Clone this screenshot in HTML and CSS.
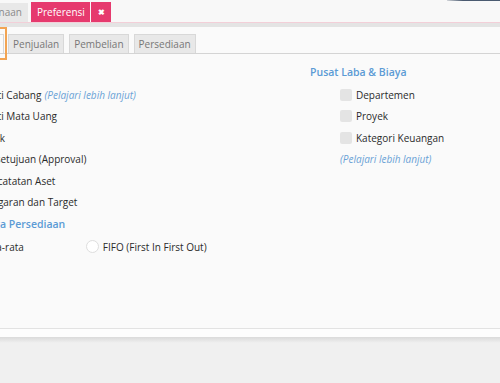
FILE: index.html
```html
<!DOCTYPE html>
<html>
<head>
<meta charset="utf-8">
<link rel="stylesheet" href="styles.css">
</head>
<body>
<div class="screen">
  <div class="edge"></div>
  <div class="topbar">
    <div class="tab-prev">Penggunaan</div>
    <div class="tab-active">Preferensi</div>
    <div class="tab-close">&#x2716;</div>
  </div>
  <div class="band"></div>
  <div class="panel">
    <div class="focus-ring"></div>
    <div class="subtabs">
      <div class="subtab subtab-current">Umum</div>
      <div class="subtab">Penjualan</div>
      <div class="subtab">Pembelian</div>
      <div class="subtab">Persediaan</div>
    </div>
    <div class="content">
      <div class="col">
        <div class="heading heading-first">Fitur</div>
        <div class="row"><span class="cb"></span><span>Multi Cabang</span><span class="link">(Pelajari lebih lanjut)</span></div>
        <div class="row"><span class="cb"></span><span>Multi Mata Uang</span></div>
        <div class="row"><span class="cb"></span><span>Pajak</span></div>
        <div class="row"><span class="cb"></span><span>Persetujuan (Approval)</span></div>
        <div class="row"><span class="cb"></span><span>Pencatatan Aset</span></div>
        <div class="row"><span class="cb"></span><span>Anggaran dan Target</span></div>
        <div class="heading">Metode Harga Persediaan</div>
        <div class="row radios">
          <span class="opt"><span class="rb"></span><span>Rata-rata</span></span>
          <span class="opt opt-fifo"><span class="rb"></span><span>FIFO (First In First Out)</span></span>
        </div>
      </div>
      <div class="col">
        <div class="heading">Pusat Laba &amp; Biaya</div>
        <div class="row"><span class="cb"></span><span>Departemen</span></div>
        <div class="row"><span class="cb"></span><span>Proyek</span></div>
        <div class="row"><span class="cb"></span><span>Kategori Keuangan</span></div>
        <div class="row"><span class="link link-solo">(Pelajari lebih lanjut)</span></div>
      </div>
    </div>
  </div>
  <div class="strip"></div>
  <div class="shadow"></div>
</div>
</body>
</html>
```
FILE: styles.css
```css
html, body {
  margin: 0;
  padding: 0;
}
body {
  width: 500px;
  height: 383px;
  overflow: hidden;
  background: #f0f0f0;
  font-family: "Open Sans", "Liberation Sans", sans-serif;
  font-size: 10px;
  color: #2a2a2a;
}
.screen {
  position: relative;
  width: 500px;
  height: 383px;
  overflow: hidden;
}
.edge {
  position: absolute;
  top: 0;
  left: 447px;
  width: 53px;
  height: 1px;
  background: linear-gradient(to right, rgba(60,75,95,0.2), #4a5a70 30%);
}
.topbar {
  height: 22px;
  background: #f8f8f8;
  display: flex;
  align-items: flex-end;
  border-bottom: 1px solid #f3cfd8;
}
.tab-prev {
  height: 19px;
  line-height: 19px;
  width: 86px;
  margin-left: -58px;
  margin-right: 3px;
  text-align: right;
  padding-right: 6px;
  box-sizing: border-box;
  background: #e8e8e8;
  color: #8a8a8a;
  white-space: nowrap;
}
.tab-active {
  height: 20px;
  line-height: 20px;
  width: 59px;
  box-sizing: border-box;
  padding-left: 6px;
  background: #e63a6e;
  color: #fff;
}
.tab-close {
  height: 20px;
  line-height: 20px;
  width: 20px;
  margin-left: 1px;
  text-align: center;
  background: #e63a6e;
  color: #fff;
  font-size: 8px;
  font-weight: bold;
}
.band {
  height: 4px;
  background: #e4e4e4;
}
.panel {
  position: relative;
  height: 294px;
  padding-top: 7px;
  background: #fafafa;
  border-bottom: 1px solid #e2e2e2;
}
.focus-ring {
  position: absolute;
  left: -40px;
  top: 0;
  width: 47px;
  height: 33px;
  box-sizing: border-box;
  border: 2px solid #f2a453;
}
.subtabs {
  margin-left: -40px;
  height: 19px;
  border-bottom: 1px solid #d4d4d4;
  display: flex;
  align-items: flex-end;
}
.subtab {
  height: 19px;
  line-height: 19px;
  box-sizing: border-box;
  padding: 0 4px;
  margin-right: 5px;
  background: #e8e8e8;
  border: 1px solid #d8d8d8;
  border-bottom: none;
  color: #777;
}
.subtab-current {
  width: 44px;
  margin-right: 4px;
  background: #fafafa;
  color: #333;
}
.content {
  margin-left: -66px;
  padding-top: 7px;
  display: grid;
  grid-template-columns: 376px 1fr;
}
.col {
  display: flex;
  flex-direction: column;
}
.heading {
  height: 23px;
  line-height: 23px;
  color: #5b9bd5;
  font-weight: 600;
  font-size: 10.5px;
  white-space: nowrap;
}
.row {
  height: 21.5px;
  display: flex;
  align-items: center;
  padding-left: 30px;
  white-space: nowrap;
}
.cb {
  width: 12px;
  height: 12px;
  border-radius: 2px;
  background: #e4e4e4;
  margin-right: 4px;
  flex: none;
}
.link {
  color: #6aa2d6;
  font-style: italic;
  margin-left: 3px;
}
.link-solo {
  margin-left: 0;
}
.opt {
  display: flex;
  align-items: center;
}
.opt-fifo {
  margin-left: 62px;
}
.rb {
  width: 11px;
  height: 11px;
  border-radius: 50%;
  border: 1px solid #dedede;
  background: #fff;
  margin-right: 4px;
  flex: none;
}
.strip {
  height: 8px;
  background: #fdfdfd;
}
.shadow {
  height: 6px;
  background: linear-gradient(#dadada, #f0f0f0);
}
```
